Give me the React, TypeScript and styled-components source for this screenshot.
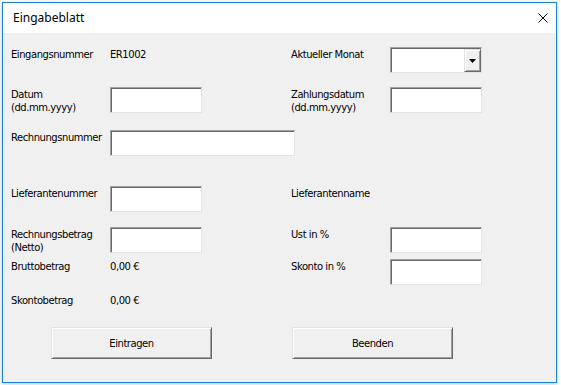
import React from "react";
import styled, { createGlobalStyle } from "styled-components";

const GlobalStyle = createGlobalStyle`
  body {
    margin: 0;
    background: #ffffff;
  }
`;

const Window = styled.div`
  margin: 2px;
  width: 555px;
  box-sizing: border-box;
  border: 1px solid #1883d7;
  box-shadow: 0 1px 4px rgba(0, 0, 0, 0.25);
  font-family: "DejaVu Sans", Verdana, sans-serif;
  font-size: 10px;
  letter-spacing: -0.45px;
  color: #000;
`;

const TitleBar = styled.div`
  height: 30px;
  background: #ffffff;
  display: flex;
  align-items: center;
  justify-content: space-between;
  padding: 0 8px 0 10px;
`;

const Title = styled.span`
  font-family: "Noto Sans", "Open Sans", sans-serif;
  font-size: 12px;
  letter-spacing: 0;
  margin-top: -2px;
`;

const CloseIcon = () => (
  <svg width="10" height="10" viewBox="0 0 10 10">
    <path d="M0.5 0.5 L9.5 9.5 M9.5 0.5 L0.5 9.5" stroke="#000" strokeWidth="1" />
  </svg>
);

const Client = styled.div`
  background: #f0f0f0;
  padding: 14px 0 23px 8px;
`;

const Row = styled.div<{ $h: number }>`
  display: grid;
  grid-template-columns: 99px 181px 99px 92px;
  height: ${(p) => p.$h}px;
  align-items: start;
`;

const Label = styled.div`
  padding-top: 1px;
  line-height: 13px;
`;

const TextBox = styled.div<{ $w?: number }>`
  width: ${(p) => p.$w ?? 92}px;
  height: 26px;
  box-sizing: border-box;
  background: #ffffff;
  border: 1px solid;
  border-color: #a0a0a0 #e3e3e3 #e3e3e3 #a0a0a0;
  box-shadow: inset 1px 1px 0 #696969;
`;

const Combo = styled(TextBox)`
  display: flex;
  justify-content: flex-end;
  padding: 1px 0 0 1px;
`;

const DropButton = styled.div`
  width: 17px;
  height: 23px;
  box-sizing: border-box;
  background: #f0f0f0;
  border: 1px solid;
  border-color: #e3e3e3 #696969 #696969 #e3e3e3;
  box-shadow: inset 1px 1px 0 #ffffff, inset -1px -1px 0 #a0a0a0;
  display: flex;
  align-items: center;
  justify-content: center;
`;

const ButtonRow = styled.div`
  display: flex;
  gap: 80px;
  padding-left: 40px;
`;

const Button = styled.button`
  width: 161px;
  height: 32px;
  box-sizing: border-box;
  background: #f0f0f0;
  border: 1px solid;
  border-color: #e3e3e3 #696969 #696969 #e3e3e3;
  box-shadow: inset 1px 1px 0 #ffffff, inset -1px -1px 0 #a0a0a0;
  font-family: inherit;
  font-size: 10px;
  letter-spacing: -0.45px;
  color: #000;
  padding: 0;
`;

export default function App() {
  return (
    <>
      <GlobalStyle />
      <Window>
        <TitleBar>
          <Title>Eingabeblatt</Title>
          <CloseIcon />
        </TitleBar>
        <Client>
          <Row $h={40}>
            <Label>Eingangsnummer</Label>
            <Label>ER1002</Label>
            <Label>Aktueller Monat</Label>
            <Combo>
              <DropButton>
                <svg width="7" height="4" viewBox="0 0 7 4">
                  <polygon points="0,0 7,0 3.5,4" fill="#000" />
                </svg>
              </DropButton>
            </Combo>
          </Row>
          <Row $h={43}>
            <Label>
              Datum
              <br />
              (dd.mm.yyyy)
            </Label>
            <TextBox />
            <Label>
              Zahlungsdatum
              <br />
              (dd.mm.yyyy)
            </Label>
            <TextBox />
          </Row>
          <Row $h={56}>
            <Label>Rechnungsnummer</Label>
            <TextBox $w={185} />
          </Row>
          <Row $h={41}>
            <Label>Lieferantenummer</Label>
            <TextBox />
            <Label>Lieferantenname</Label>
          </Row>
          <Row $h={32}>
            <Label>
              Rechnungsbetrag
              <br />
              (Netto)
            </Label>
            <TextBox />
            <Label>Ust in %</Label>
            <TextBox />
          </Row>
          <Row $h={34}>
            <Label>Bruttobetrag</Label>
            <Label>0,00 €</Label>
            <Label>Skonto in %</Label>
            <TextBox />
          </Row>
          <Row $h={34}>
            <Label>Skontobetrag</Label>
            <Label>0,00 €</Label>
          </Row>
          <ButtonRow>
            <Button>Eintragen</Button>
            <Button>Beenden</Button>
          </ButtonRow>
        </Client>
      </Window>
    </>
  );
}
